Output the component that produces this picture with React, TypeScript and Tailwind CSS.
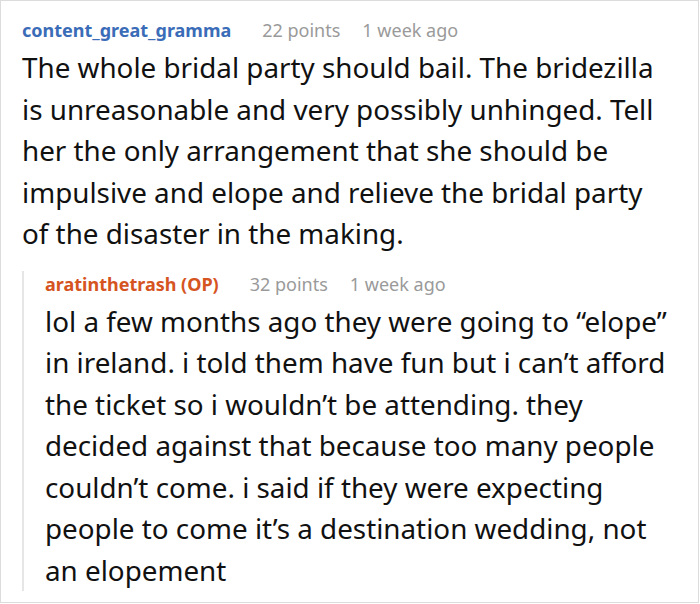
const App = () => {
  return (
    <div
      className="h-[603px] w-[699px] overflow-hidden border border-[#dcdcdc] bg-white text-[#111]"
      style={{ fontFamily: '"Noto Sans", sans-serif' }}
    >
      <div className="pl-[21px] pr-[24px] pt-[16px]">
        <div className="flex items-center gap-[31px] text-[18px] leading-[26px]">
          <span className="font-bold text-[#3a6cb8]">content_great_gramma</span>
          <div className="flex gap-[22px] text-[#9a9a9a]">
            <span>22 points</span>
            <span>1 week ago</span>
          </div>
        </div>
        <p className="mt-[4px] text-[27.8px] leading-[41.5px]">
          The whole bridal party should bail. The bridezilla is unreasonable and very possibly unhinged. Tell
          her the only arrangement that she should be impulsive and elope and relieve the bridal party of the
          disaster in the making.
        </p>
        <div className="mt-[27px] border-l-2 border-[#e6e6e6] pl-[21px]">
          <div className="-mt-[11px] flex items-center gap-[31px] text-[18px] leading-[26px]">
            <span className="font-bold text-[#d5541f]">aratinthetrash (OP)</span>
            <div className="flex gap-[22px] text-[#9a9a9a]">
              <span>32 points</span>
              <span>1 week ago</span>
            </div>
          </div>
          <p className="-mb-[4px] mt-[4px] text-[27.8px] leading-[41.5px]">
            lol a few months ago they were going to “elope” in ireland. i told them have fun but i can’t afford
            the ticket so i wouldn’t be attending. they decided against that because too many people couldn’t
            come. i said if they were expecting people to come it’s a destination wedding, not an elopement
          </p>
        </div>
      </div>
    </div>
  );
};

export default App;
